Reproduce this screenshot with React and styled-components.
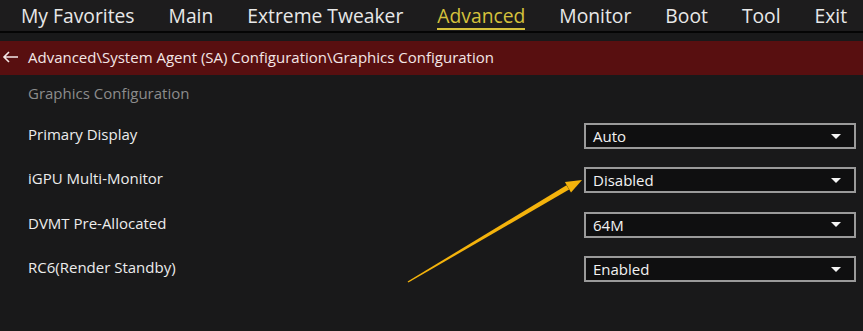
import styled, { createGlobalStyle } from "styled-components";

const GlobalStyle = createGlobalStyle`
  body {
    margin: 0;
    background: #19191a;
    font-family: "Open Sans", "Noto Sans", sans-serif;
  }
`;

const Page = styled.div`
  position: relative;
  width: 863px;
  height: 331px;
  background: #19191a;
  overflow: hidden;
`;

const NavBar = styled.nav`
  height: 31px;
  display: flex;
  align-items: center;
  gap: 34px;
  padding-left: 21px;
  background: #1d1c1d;
  border-bottom: 2px solid #050505;
`;

const NavItem = styled.span`
  font-size: 19.3px;
  line-height: 24px;
  color: ${(p) => (p.$active ? "#d6c23c" : "#e8e8e8")};
  border-bottom: 2px solid ${(p) => (p.$active ? "#d6c23c" : "transparent")};
  padding-top: 2px;
  white-space: nowrap;
`;

const Breadcrumb = styled.div`
  margin-top: 8px;
  height: 34px;
  display: flex;
  align-items: center;
  gap: 9px;
  padding: 0 0 2px 2px;
  box-sizing: border-box;
  background: #580f10;
  color: #f3e6e6;
  font-size: 15px;
`;

const BackArrow = styled.svg`
  width: 17px;
  height: 12px;
`;

const SectionTitle = styled.div`
  height: 39px;
  box-sizing: border-box;
  display: flex;
  align-items: center;
  padding: 0 0 4px 28px;
  color: #8c8c8c;
  font-size: 15px;
`;

const Row = styled.div`
  height: 44.3px;
  display: flex;
  align-items: center;
  justify-content: space-between;
  padding: 0 7px 0 28px;
`;

const Label = styled.span`
  color: #ececec;
  font-size: 15px;
  margin-top: -4px;
`;

const Select = styled.div`
  width: 272px;
  height: 26px;
  box-sizing: border-box;
  display: flex;
  align-items: center;
  justify-content: space-between;
  padding: 0 13px 0 7px;
  border: 2px solid #9a9a9a;
  background: #0f0f10;
  color: #f2f2f2;
  font-size: 15px;
`;

const Caret = styled.span`
  width: 0;
  height: 0;
  border-left: 5px solid transparent;
  border-right: 5px solid transparent;
  border-top: 5px solid #f4f4f4;
`;

const Annotation = styled.svg`
  position: absolute;
  left: 0;
  top: 0;
  pointer-events: none;
`;

const menu = ["My Favorites", "Main", "Extreme Tweaker", "Advanced", "Monitor", "Boot", "Tool", "Exit"];

const settings = [
  { label: "Primary Display", value: "Auto" },
  { label: "iGPU Multi-Monitor", value: "Disabled" },
  { label: "DVMT Pre-Allocated", value: "64M" },
  { label: "RC6(Render Standby)", value: "Enabled" },
];

export default function App() {
  return (
    <Page>
      <GlobalStyle />
      <NavBar>
        {menu.map((m) => (
          <NavItem key={m} $active={m === "Advanced"}>
            {m}
          </NavItem>
        ))}
      </NavBar>
      <Breadcrumb>
        <BackArrow viewBox="0 0 17 12">
          <path d="M16 6H2M7 1L2 6l5 5" fill="none" stroke="#f3e6e6" strokeWidth="1.6" />
        </BackArrow>
        Advanced\System Agent (SA) Configuration\Graphics Configuration
      </Breadcrumb>
      <SectionTitle>Graphics Configuration</SectionTitle>
      {settings.map((s) => (
        <Row key={s.label}>
          <Label>{s.label}</Label>
          <Select>
            {s.value}
            <Caret />
          </Select>
        </Row>
      ))}
      <Annotation width="863" height="331" viewBox="0 0 863 331">
        <polygon
          points="408.4,282.5 407.6,281.5 566.5,185.3 569.1,189.6"
          fill="#f4b30c"
        />
        <polygon points="582,180 564.9,182.1 571.0,192.4" fill="#f4b30c" />
      </Annotation>
    </Page>
  );
}
